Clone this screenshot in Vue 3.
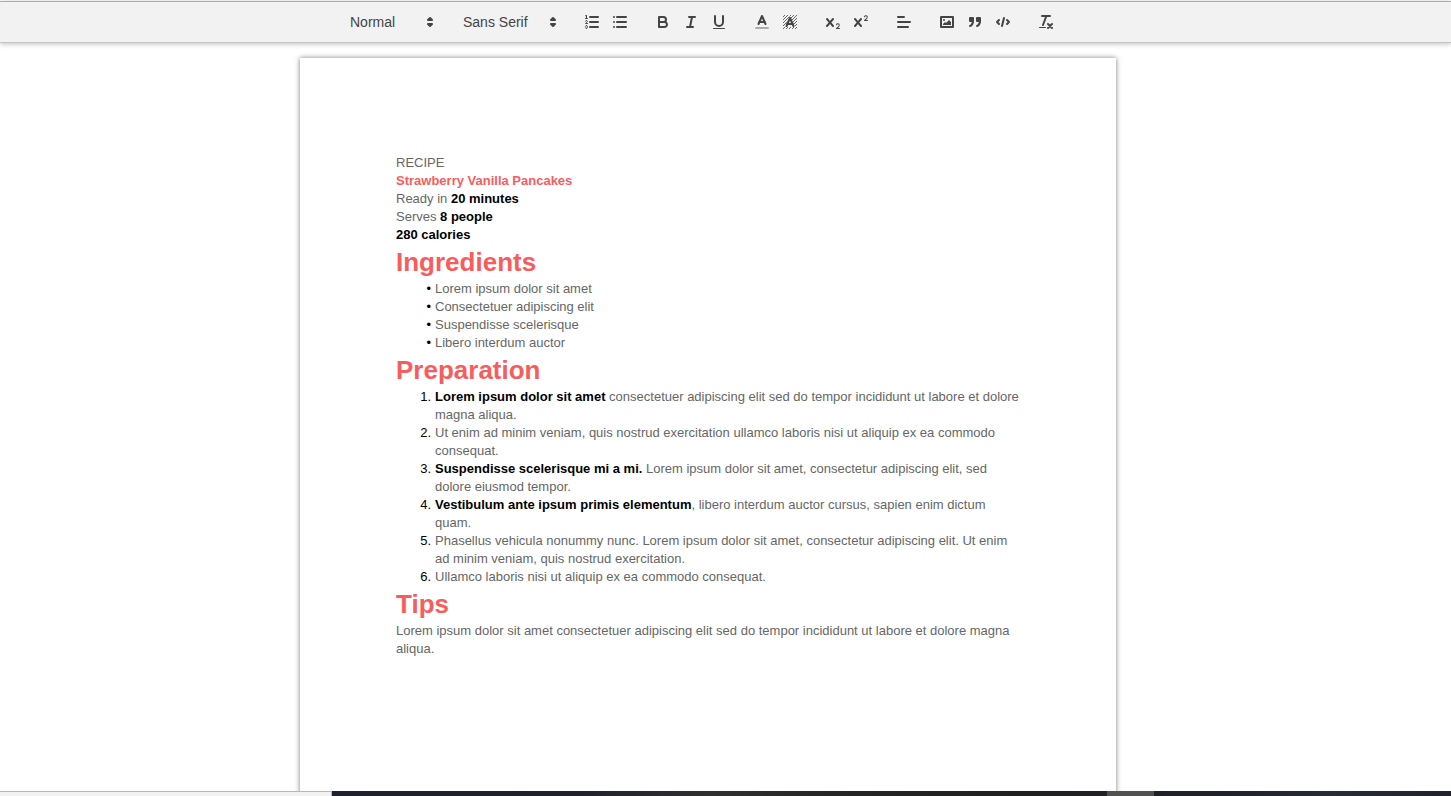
<script setup>
import { ref } from 'vue'

const block = ref('Normal')
const font = ref('Sans Serif')

const cross =
  'M9.65,5.241a1,1,0,0,0-1.409.108L6,7.964,3.759,5.349A1,1,0,0,0,2.192,6.592Q2.215,6.621,2.241,6.649L4.684,9.5,2.241,12.35A1,1,0,0,0,3.71,13.707q0.026-.028.049-0.057L6,11.036,8.241,13.65a1,1,0,1,0,1.567-1.243Q9.785,12.378,9.759,12.35L7.316,9.5,9.759,6.651A1,1,0,0,0,9.65,5.241Z'

const groups = [
  [
    {
      label: 'Numbered list',
      svg: '<path class="s" d="M7 4H15M7 9H15M7 14H15"/><path class="s thin" d="M2.5 5.5H4.5"/><path class="f" d="M3.5,6A0.5,0.5,0,0,1,3,5.5V3.085l-0.276.138A0.5,0.5,0,0,1,2.053,3c-0.124-.247-0.023-0.324.224-0.447l1-.5A0.5,0.5,0,0,1,4,2.5v3A0.5,0.5,0,0,1,3.5,6Z"/><path class="s thin" d="M4.5,10.5h-2c0-.234,1.85-1.076,1.85-2.234A0.959,0.959,0,0,0,2.5,8.156"/><path class="s thin" d="M2.5,14.846a0.959,0.959,0,0,0,1.85-.109A0.7,0.7,0,0,0,3.75,14a0.688,0.688,0,0,0,.6-0.736,0.959,0.959,0,0,0-1.85-.109"/>'
    },
    {
      label: 'Bulleted list',
      svg: '<path class="s" d="M6 4H15M6 9H15M6 14H15M3 4H3M3 9H3M3 14H3"/>'
    }
  ],
  [
    {
      label: 'Bold',
      svg: '<path class="s" d="M5,4H9.5A2.5,2.5,0,0,1,12,6.5v0A2.5,2.5,0,0,1,9.5,9H5V4Z"/><path class="s" d="M5,9h5.5A2.5,2.5,0,0,1,13,11.5v0A2.5,2.5,0,0,1,10.5,14H5V9Z"/>'
    },
    { label: 'Italic', svg: '<path class="s" d="M7 4H13M5 14H11M8 14L10 4"/>' },
    {
      label: 'Underline',
      svg: '<path class="s" d="M5,3V9a4.012,4.012,0,0,0,4,4H9a4.012,4.012,0,0,0,4-4V3"/><rect class="f" x="3" y="15" width="12" height="1" rx="0.5"/>'
    }
  ],
  [
    {
      label: 'Text colour',
      svg: '<path class="s faint" d="M3 15H15"/><polyline class="s" points="5.5 11 9 3 12.5 11"/><path class="s" d="M11.63 9H6.38"/>'
    },
    {
      label: 'Highlight colour',
      svg: '<path class="s hatch" d="M2 4L4 2M2 7L7 2M2 10L10 2M2 13L13 2M2 16L16 2M5 16L16 5M8 16L16 8M11 16L16 11M14 16L16 14"/><path class="halo" d="M5.5 13L9 5L12.5 13Z"/><polyline class="s" points="5.5 13 9 5 12.5 13"/><path class="s" d="M11.63 11H6.38"/>'
    }
  ],
  [
    {
      label: 'Subscript',
      svg: `<path class="f" d="M15.5,15H13.861a3.858,3.858,0,0,0,1.914-2.975,1.8,1.8,0,0,0-1.6-1.751A1.921,1.921,0,0,0,12.021,11.7a0.5,0.5,0,1,0,.957.291h0a0.914,0.914,0,0,1,1.053-.725,0.81,0.81,0,0,1,.744.762c0,1.076-1.17,1.87-1.94,2.431A1.456,1.456,0,0,0,12,15.5a0.5,0.5,0,0,0,.5.5h3A0.5,0.5,0,0,0,15.5,15Z"/><path class="f" d="${cross}"/>`
    },
    {
      label: 'Superscript',
      svg: `<path class="f" d="M15.5,7H13.861a4.015,4.015,0,0,0,1.914-2.975,1.8,1.8,0,0,0-1.6-1.751A1.922,1.922,0,0,0,12.021,3.7a0.5,0.5,0,1,0,.957.291,0.917,0.917,0,0,1,1.053-.725,0.81,0.81,0,0,1,.744.762c0,1.077-1.164,1.925-1.934,2.486A1.423,1.423,0,0,0,12,7.5a0.5,0.5,0,0,0,.5.5h3A0.5,0.5,0,0,0,15.5,7Z"/><path class="f" d="${cross}"/>`
    }
  ],
  [{ label: 'Align', svg: '<path class="s" d="M3 9H15M3 14H13M3 4H9"/>' }],
  [
    {
      label: 'Insert image',
      svg: '<rect class="s" x="3" y="4" width="12" height="10"/><circle class="f" cx="6" cy="7" r="1"/><polyline class="f" points="5 12 5 11 7 9 8 10 11 7 13 9 13 12 5 12"/>'
    },
    {
      label: 'Blockquote',
      svg: '<rect class="s f" x="4" y="5" width="3" height="3"/><rect class="s f" x="11" y="5" width="3" height="3"/><path class="s f" d="M7,8c0,4.031-3,5-3,5"/><path class="s f" d="M14,8c0,4.031-3,5-3,5"/>'
    },
    {
      label: 'Code',
      svg: '<polyline class="s" points="5 7 3 9 5 11"/><polyline class="s" points="13 7 15 9 13 11"/><path class="s" d="M10 5L8 13"/>'
    }
  ],
  [
    {
      label: 'Clear formatting',
      svg: '<path class="s" d="M5 3H13M6 12L9.35 3M11 11L15 15M15 11L11 15"/><rect class="f" x="2" y="14" width="7" height="1" rx="0.5"/>'
    }
  ]
]

const ingredients = [
  'Lorem ipsum dolor sit amet',
  'Consectetuer adipiscing elit',
  'Suspendisse scelerisque',
  'Libero interdum auctor'
]

const steps = [
  { lead: 'Lorem ipsum dolor sit amet', text: ' consectetuer adipiscing elit sed do tempor incididunt ut labore et dolore magna aliqua.' },
  { lead: '', text: 'Ut enim ad minim veniam, quis nostrud exercitation ullamco laboris nisi ut aliquip ex ea commodo consequat.' },
  { lead: 'Suspendisse scelerisque mi a mi.', text: ' Lorem ipsum dolor sit amet, consectetur adipiscing elit, sed dolore eiusmod tempor.' },
  { lead: 'Vestibulum ante ipsum primis elementum', text: ', libero interdum auctor cursus, sapien enim dictum quam.' },
  { lead: '', text: 'Phasellus vehicula nonummy nunc. Lorem ipsum dolor sit amet, consectetur adipiscing elit. Ut enim ad minim veniam, quis nostrud exercitation.' },
  { lead: '', text: 'Ullamco laboris nisi ut aliquip ex ea commodo consequat.' }
]
</script>

<template>
  <div class="app">
    <div class="toolbar" role="toolbar" aria-label="Formatting">
      <div class="group picker">
        <select v-model="block" class="block-select" aria-label="Paragraph style">
          <option>Normal</option>
          <option>Heading 1</option>
          <option>Heading 2</option>
        </select>
        <svg class="arrows" viewBox="0 0 18 18"><polygon class="s f" points="7 11 9 13 11 11" /><polygon class="s f" points="7 7 9 5 11 7" /></svg>
      </div>
      <div class="group picker">
        <select v-model="font" class="font-select" aria-label="Font">
          <option>Sans Serif</option>
          <option>Serif</option>
          <option>Monospace</option>
        </select>
        <svg class="arrows" viewBox="0 0 18 18"><polygon class="s f" points="7 11 9 13 11 11" /><polygon class="s f" points="7 7 9 5 11 7" /></svg>
      </div>
      <div v-for="(group, i) in groups" :key="i" class="group">
        <button v-for="tool in group" :key="tool.label" type="button" :aria-label="tool.label">
          <svg viewBox="0 0 18 18" v-html="tool.svg"></svg>
        </button>
      </div>
    </div>

    <main class="workspace">
      <article class="page">
        <p>RECIPE</p>
        <p class="title">Strawberry Vanilla Pancakes</p>
        <p>Ready in <strong>20 minutes</strong></p>
        <p>Serves <strong>8 people</strong></p>
        <p><strong>280 calories</strong></p>
        <h1>Ingredients</h1>
        <ul>
          <li v-for="item in ingredients" :key="item">{{ item }}</li>
        </ul>
        <h1>Preparation</h1>
        <ol>
          <li v-for="step in steps" :key="step.text"><strong v-if="step.lead">{{ step.lead }}</strong>{{ step.text }}</li>
        </ol>
        <h1>Tips</h1>
        <p>Lorem ipsum dolor sit amet consectetuer adipiscing elit sed do tempor incididunt ut labore et dolore magna aliqua.</p>
      </article>
    </main>

    <footer class="taskbar">
      <div class="panel"></div>
      <div class="active-task"></div>
    </footer>
  </div>
</template>

<style>
body {
  margin: 0;
  background: #fff;
}
</style>

<style scoped>
.app {
  display: flex;
  flex-direction: column;
  height: 100vh;
  font-family: "Liberation Sans", Arial, sans-serif;
  font-size: 13px;
  line-height: 18px;
  color: #666;
}

.toolbar {
  position: relative;
  z-index: 1;
  display: flex;
  justify-content: center;
  margin-top: 1px;
  padding: 8px 34px 8px 0;
  background: #f2f2f2;
  border-top: 1px solid #ababab;
  border-bottom: 1px solid #c4c4c4;
  box-shadow: 0 1px 5px rgba(0, 0, 0, 0.25);
}

.group {
  display: flex;
  margin-right: 15px;
}

.picker {
  position: relative;
}

.picker select {
  appearance: none;
  height: 24px;
  margin: 0;
  padding: 0 20px 0 8px;
  border: 0;
  background: transparent;
  color: #444;
  font-family: inherit;
  font-size: 14px;
}

.block-select {
  width: 98px;
}

.font-select {
  width: 108px;
}

.arrows {
  position: absolute;
  top: 3px;
  right: 1px;
  width: 18px;
  height: 18px;
  pointer-events: none;
}

button {
  width: 28px;
  height: 24px;
  padding: 3px 5px;
  border: 0;
  background: none;
  cursor: pointer;
}

button svg {
  display: block;
  width: 18px;
  height: 18px;
}

.toolbar :deep(.s) {
  fill: none;
  stroke: #444;
  stroke-width: 2;
  stroke-linecap: round;
  stroke-linejoin: round;
}

.toolbar :deep(.f) {
  fill: #444;
}

.toolbar :deep(.thin) {
  stroke-width: 1;
}

.toolbar :deep(.faint) {
  opacity: 0.4;
}

.toolbar :deep(.hatch) {
  stroke-width: 0.8;
  stroke-linecap: butt;
}

.toolbar :deep(.halo) {
  fill: #f2f2f2;
  stroke: #f2f2f2;
  stroke-width: 2;
}

.workspace {
  flex: 1;
  min-height: 0;
  overflow: hidden;
  padding: 15px 35px 0 0;
}

.page {
  box-sizing: border-box;
  max-width: 816px;
  min-height: 1056px;
  margin: 0 auto;
  padding: 96px;
  background: #fff;
  box-shadow: 0 0 5px rgba(0, 0, 0, 0.5);
}

p,
h1,
ul,
ol {
  margin: 0;
  padding: 0;
}

.title,
h1 {
  color: #f75d5d;
  font-weight: bold;
}

h1 {
  font-size: 26px;
  line-height: 36px;
}

strong {
  color: #000;
}

ul,
ol {
  padding-left: 39px;
  list-style: none;
  counter-reset: step;
}

li::before {
  display: inline-block;
  width: 35px;
  margin-left: -39px;
  margin-right: 4px;
  color: #000;
  text-align: right;
  content: "•";
}

ol li {
  counter-increment: step;
}

ol li::before {
  content: counter(step) ".";
}

.taskbar {
  display: flex;
  height: 5px;
  background: linear-gradient(90deg, #1f212e 23%, #20212d 40%, #303030 49%, #262626 57%, #202020 70%, #20222c 85%, #282c36 92%, #20212c);
}

.panel {
  box-sizing: border-box;
  width: 332px;
  background: #f2f2f2;
  border-top: 1px solid #b8bab8;
  border-right: 1px solid #b8bab8;
}

.active-task {
  width: 47px;
  margin-left: 775px;
  background: #515151;
}
</style>
